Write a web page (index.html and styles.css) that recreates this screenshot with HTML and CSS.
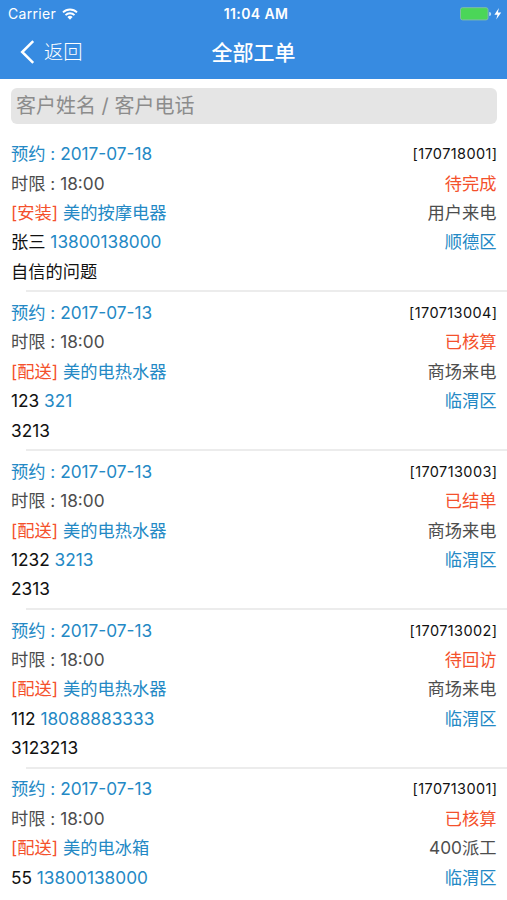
FILE: index.html
```
<!DOCTYPE html>
<html lang="zh-CN">
<head>
    <meta charset="UTF-8">
    <meta name="viewport" content="width=device-width, initial-scale=1.0">
    <title>全部工单</title>
    <link rel="stylesheet" href="styles.css">
</head>
<body>

    <header class="header">
        <div class="status-bar">
            <div class="carrier">
                <span>Carrier</span>
                <svg width="16" height="12" viewBox="0 0 16 12" fill="none" stroke="#fff" stroke-width="1.9">
                    <path d="M1 4.4a10 10 0 0 1 14 0"/>
                    <path d="M3.5 7.1a6.4 6.4 0 0 1 9 0"/>
                    <path d="M8 11.8L5.4 9.1a3.7 3.7 0 0 1 5.2 0z" fill="#fff" stroke="none"/>
                </svg>
            </div>
            <div class="time">11:04 AM</div>
            <div class="battery">
                <svg width="42" height="14" viewBox="0 0 42 14">
                    <rect x="0.5" y="0.7" width="27.5" height="12.2" rx="2" fill="#4bd658" stroke="#7fbca8"/>
                    <path d="M29.2 5q2 .2 2 2t-2 2z" fill="#b9dcf5"/>
                    <path d="M38.9 1L34.4 7.7h3.1L36.2 12.6l5-7h-3.3z" fill="#fff"/>
                </svg>
            </div>
        </div>
        <nav class="nav-bar">
            <a class="back" href="#">
                <svg width="15" height="24" viewBox="0 0 15 24" fill="none" stroke="#fff" stroke-width="2.5">
                    <path d="M13.2 1.2L2.2 12l11 10.8"/>
                </svg>
                <span>返回</span>
            </a>
            <h1>全部工单</h1>
        </nav>
    </header>

    <div class="search">
        <input type="text" class="search-input" placeholder="客户姓名 / 客户电话">
    </div>

    <ul class="order-list">
        <li class="order">
            <div class="row"><span class="blue"><span class="label">预约 :</span> 2017-07-18</span><span class="number">[170718001]</span></div>
            <div class="row"><span class="limit"><span class="label">时限 :</span> 18:00</span><span class="red">待完成</span></div>
            <div class="row"><span class="blue"><span class="red">[安装]</span> 美的按摩电器</span><span class="source">用户来电</span></div>
            <div class="row"><span>张三 <span class="blue">13800138000</span></span><span class="blue">顺德区</span></div>
            <div class="row"><span>自信的问题</span></div>
        </li>
        <li class="order">
            <div class="row"><span class="blue"><span class="label">预约 :</span> 2017-07-13</span><span class="number">[170713004]</span></div>
            <div class="row"><span class="limit"><span class="label">时限 :</span> 18:00</span><span class="red">已核算</span></div>
            <div class="row"><span class="blue"><span class="red">[配送]</span> 美的电热水器</span><span class="source">商场来电</span></div>
            <div class="row"><span>123 <span class="blue">321</span></span><span class="blue">临渭区</span></div>
            <div class="row"><span>3213</span></div>
        </li>
        <li class="order">
            <div class="row"><span class="blue"><span class="label">预约 :</span> 2017-07-13</span><span class="number">[170713003]</span></div>
            <div class="row"><span class="limit"><span class="label">时限 :</span> 18:00</span><span class="red">已结单</span></div>
            <div class="row"><span class="blue"><span class="red">[配送]</span> 美的电热水器</span><span class="source">商场来电</span></div>
            <div class="row"><span>1232 <span class="blue">3213</span></span><span class="blue">临渭区</span></div>
            <div class="row"><span>2313</span></div>
        </li>
        <li class="order">
            <div class="row"><span class="blue"><span class="label">预约 :</span> 2017-07-13</span><span class="number">[170713002]</span></div>
            <div class="row"><span class="limit"><span class="label">时限 :</span> 18:00</span><span class="red">待回访</span></div>
            <div class="row"><span class="blue"><span class="red">[配送]</span> 美的电热水器</span><span class="source">商场来电</span></div>
            <div class="row"><span>112 <span class="blue">18088883333</span></span><span class="blue">临渭区</span></div>
            <div class="row"><span>3123213</span></div>
        </li>
        <li class="order">
            <div class="row"><span class="blue"><span class="label">预约 :</span> 2017-07-13</span><span class="number">[170713001]</span></div>
            <div class="row"><span class="limit"><span class="label">时限 :</span> 18:00</span><span class="red">已核算</span></div>
            <div class="row"><span class="blue"><span class="red">[配送]</span> 美的电冰箱</span><span class="source">400派工</span></div>
            <div class="row"><span>55 <span class="blue">13800138000</span></span><span class="blue">临渭区</span></div>
        </li>
    </ul>

</body>
</html>
```
FILE: styles.css
```
* {
    box-sizing: border-box;
}

body {
    margin: 0;
    height: 900px;
    overflow: hidden;
    background-color: #fff;
    color: #111;
    font-family: Inter, "Noto Sans CJK SC", sans-serif;
    font-size: 17.25px;
}

.header {
    height: 79px;
    background-color: #378be1;
    color: #fff;
}

.status-bar {
    display: grid;
    grid-template-columns: 1fr auto 1fr;
    align-items: center;
    height: 27px;
    padding: 0 5px 0 8px;
    font-size: 14px;
}

.carrier {
    display: flex;
    align-items: center;
    gap: 6px;
    letter-spacing: 0.3px;
}

.time {
    font-weight: 600;
    letter-spacing: 0.4px;
    padding-left: 2px;
}

.battery {
    display: flex;
    justify-content: flex-end;
}

.nav-bar {
    display: grid;
    grid-template-columns: 1fr auto 1fr;
    align-items: center;
    height: 50px;
    padding: 0 20px;
}

.back {
    display: flex;
    align-items: center;
    gap: 9px;
    color: #fff;
    font-size: 19.3px;
    font-weight: 300;
    line-height: 26px;
    text-decoration: none;
}

h1 {
    margin: 0 0 2px;
    font-size: 21px;
    font-weight: 500;
}

.search {
    height: 54.4px;
    padding: 9px 10px 0 11px;
}

.search-input {
    display: block;
    width: 100%;
    height: 36px;
    padding: 0 5px;
    border: none;
    border-radius: 6px;
    background-color: #e5e5e5;
    font-family: inherit;
    font-size: 20px;
}

.search-input::placeholder {
    color: #8c8c8c;
    opacity: 1;
}

.order-list {
    margin: 0;
    padding: 0;
    list-style: none;
}

.order {
    height: 158.8px;
    padding: 5.9px 10.5px 0 11px;
    background: linear-gradient(#ececec, #ececec) 26px 100% / 100% 2px no-repeat;
}

.row {
    display: flex;
    justify-content: space-between;
    align-items: center;
    height: 29.4px;
    line-height: 29.4px;
    white-space: nowrap;
}

.label {
    font-feature-settings: "calt" 0;
}

.blue {
    color: #2489c5;
}

.red {
    color: #f4512c;
}

.limit,
.source {
    color: #4d4d4d;
}

.number {
    margin-right: -1px;
    font-size: 14.5px;
    letter-spacing: 0.4px;
}
```
